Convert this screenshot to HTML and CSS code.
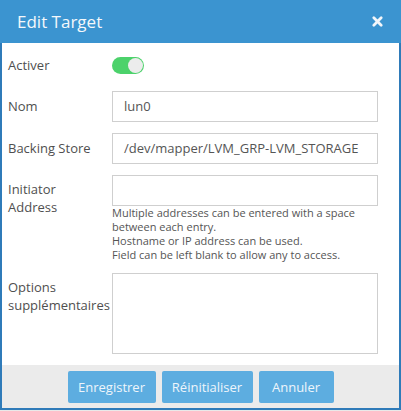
FILE: index.html
```html
<!DOCTYPE html>
<html>
<head>
<meta charset="utf-8">
<link rel="stylesheet" href="styles.css">
</head>
<body>
<div class="dialog">
  <div class="header">
    <span class="title">Edit Target</span>
    <svg class="close" width="12" height="12" viewBox="0 0 12 12"><path d="M2 2 L10 10 M10 2 L2 10" stroke="#f2f6fa" stroke-width="3" stroke-linecap="round"/></svg>
  </div>
  <div class="body">
    <div class="row row-toggle">
      <label class="lbl">Activer</label>
      <div class="field"><span class="toggle"><span class="knob"></span></span></div>
    </div>
    <div class="row">
      <label class="lbl">Nom</label>
      <div class="field"><div class="input">lun0</div></div>
    </div>
    <div class="row">
      <label class="lbl">Backing Store</label>
      <div class="field"><div class="input">/dev/mapper/LVM_GRP-LVM_STORAGE</div></div>
    </div>
    <div class="row">
      <label class="lbl lbl-multi">Initiator<br>Address</label>
      <div class="field">
        <div class="input"></div>
        <div class="help">Multiple addresses can be entered with a space<br>between each entry.<br>Hostname or IP address can be used.<br>Field can be left blank to allow any to access.</div>
      </div>
    </div>
    <div class="row">
      <label class="lbl lbl-multi">Options<br>supplémentaires</label>
      <div class="field"><div class="textarea"></div></div>
    </div>
  </div>
  <div class="footer">
    <button class="btn btn-save">Enregistrer</button>
    <button class="btn btn-reset">Réinitialiser</button>
    <button class="btn btn-cancel">Annuler</button>
  </div>
</div>
</body>
</html>
```
FILE: styles.css
```css
html, body {
  margin: 0;
  padding: 0;
  background: #e9e9e9;
}
body {
  font-family: "Open Sans", "Noto Sans", sans-serif;
  color: #444;
  width: 401px;
  height: 411px;
  overflow: hidden;
}
.dialog {
  width: 401px;
  height: 410px;
  box-sizing: border-box;
  border: 2px solid #2f7bb9;
  border-top: 0;
  background: #fff;
  display: flex;
  flex-direction: column;
}
.header {
  height: 43px;
  background: #3b94d0;
  margin: 0 -2px;
  padding: 0 18px 0 17px;
  display: flex;
  align-items: center;
  justify-content: space-between;
  flex: none;
}
.title {
  color: #f4f8fb;
  font-size: 17px;
  line-height: 20px;
}
.close {
  display: block;
  width: 11px;
  height: 11px;
}
.body {
  flex: 1;
  padding: 13px 21px 0 6px;
  display: flex;
  flex-direction: column;
  gap: 11px;
}
.row {
  display: grid;
  grid-template-columns: 104px 1fr;
  align-items: start;
}
.row-toggle {
  height: 24px;
}
.lbl {
  font-size: 13px;
  color: #4f4f4f;
  line-height: 18px;
  padding-top: 6px;
}
.row-toggle .lbl {
  padding-top: 0;
}
.lbl-multi {
  padding-top: 5px;
}
.toggle {
  display: block;
  width: 32px;
  height: 17px;
  border-radius: 9px;
  background: #4cd26b;
  position: relative;
  margin-top: 1px;
}
.knob {
  position: absolute;
  right: 1px;
  top: 1px;
  width: 15px;
  height: 15px;
  border-radius: 50%;
  background: #ececec;
}
.input {
  height: 31px;
  box-sizing: border-box;
  border: 1px solid #cfcfcf;
  padding: 0 11px;
  font-size: 13px;
  line-height: 29px;
  color: #555;
}
.textarea {
  height: 81px;
  box-sizing: border-box;
  border: 1px solid #cfcfcf;
}
.help {
  font-size: 11px;
  line-height: 14px;
  color: #555;
  padding-top: 0;
}
.footer {
  flex: none;
  height: 43px;
  box-sizing: border-box;
  background: #ebebeb;
  display: flex;
  justify-content: center;
  gap: 6px;
  padding-top: 6px;
}
.btn {
  height: 32px;
  border: 0;
  border-radius: 2px;
  background: #5dade0;
  color: #eef5fb;
  font-family: "Open Sans", "Noto Sans", sans-serif;
  font-size: 13px;
  padding: 0;
}
.btn-save { width: 88px; }
.btn-reset { width: 91px; }
.btn-cancel { width: 75px; }
```
